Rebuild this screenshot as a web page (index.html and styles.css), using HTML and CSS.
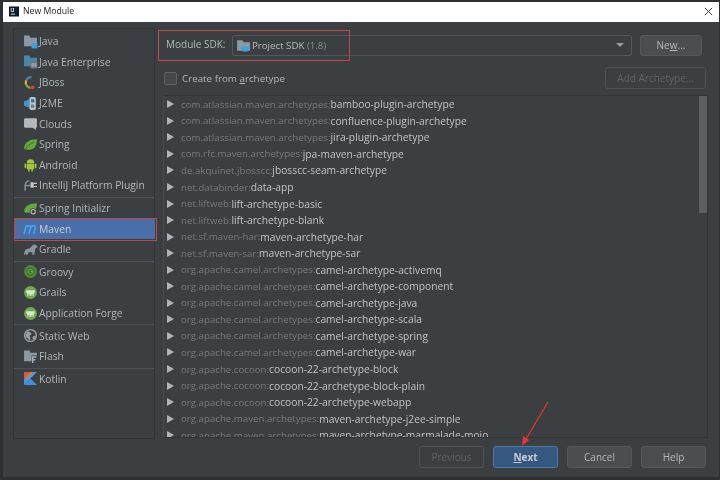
FILE: index.html
```html
<!DOCTYPE html>
<html lang="en">
<head>
<meta charset="utf-8">
<title>New Module</title>
<link rel="stylesheet" href="styles.css">
</head>
<body>
<div class="window">
  <header class="titlebar">
    <svg class="appicon" viewBox="0 0 14 14"><rect width="14" height="14" fill="#111"/><rect x="1" y="1" width="12" height="12" fill="#0b1f33"/><rect x="2.5" y="10" width="6" height="1.2" fill="#fff"/><text x="2.2" y="8" class="appicon-text">IJ</text></svg>
    <span class="title">New Module</span>
    <svg class="close" viewBox="0 0 10 10"><path d="M1 1L9 9M9 1L1 9" stroke="#333" stroke-width="1" fill="none"/></svg>
  </header>
  <div class="body">
    <div class="main">
      <nav class="sidebar">
        <div class="group">
          <div class="item"><svg class="ic" viewBox="0 0 14 14"><path d="M1 1.500h5l1 2h6v8H1z" fill="#8c99a3"/><rect x="8" y="8" width="5.500" height="5.500" fill="#3aa3dc"/></svg>Java</div>
          <div class="item"><svg class="ic" viewBox="0 0 14 14"><path d="M1 1.500h5l1 2h6v8H1z" fill="#4b87a8"/><rect x="7" y="7" width="6.500" height="6.500" fill="#6b7680"/><path d="M8.500 8.500v3.500M10.200 8.500v3.500M11.900 8.500v3.500" stroke="#c8ccd0" stroke-width=".7"/></svg>Java Enterprise</div>
          <div class="item"><svg class="ic" viewBox="0 0 14 14"><path d="M8 2A5 5 0 0 0 3 5" stroke="#3f7fc4" stroke-width="2" fill="none"/><path d="M3 5A5 5 0 0 0 3 9" stroke="#e8b02c" stroke-width="2" fill="none"/><path d="M3 9A5 5 0 0 0 7 12" stroke="#7ea83a" stroke-width="2" fill="none"/><circle cx="9" cy="11.500" r="1.800" fill="#d9412e"/></svg>JBoss</div>
          <div class="item"><svg class="ic" viewBox="0 0 14 14"><path d="M1 5l5-2v8l-5-2z" fill="#3b97d3"/><rect x="6" y="1" width="6" height="12" rx="1.500" fill="#b8c4ce"/><rect x="7.500" y="3" width="3" height="3" fill="#3b6f99"/><rect x="7.500" y="8" width="3" height="3" fill="#6c7a86"/></svg>J2ME</div>
          <div class="item"><svg class="ic" viewBox="0 0 14 14"><path d="M2 2h10a1 1 0 0 1 1 1v7a1 1 0 0 1-1 1v2l-3-2H2a1 1 0 0 1-1-1V3a1 1 0 0 1 1-1z" fill="#b4b9bd"/></svg>Clouds</div>
          <div class="item"><svg class="ic" viewBox="0 0 14 14"><path d="M1 11C1 5 6 2 13 2c0 7-3 10-8 10-2 0-3-.5-4-1z" fill="#62a83c"/><path d="M2 11.500C4 8 7 6 10 5" stroke="#3c3f41" stroke-width=".6" fill="none"/></svg>Spring</div>
          <div class="item"><svg class="ic" viewBox="0 0 14 14"><path d="M3.500 5.500a3.500 3.500 0 0 1 7 0z" fill="#a4c639"/><rect x="3.500" y="6" width="7" height="5.500" rx=".8" fill="#a4c639"/><rect x="1.500" y="6" width="1.500" height="4.500" rx=".7" fill="#a4c639"/><rect x="11" y="6" width="1.500" height="4.500" rx=".7" fill="#a4c639"/><rect x="4.800" y="11" width="1.400" height="2.500" fill="#a4c639"/><rect x="7.800" y="11" width="1.400" height="2.500" fill="#a4c639"/></svg>Android</div>
          <div class="item"><svg class="ic" viewBox="0 0 14 14"><path d="M6 2.500A5 5 0 0 0 2 7v5" stroke="#8f979e" stroke-width="1.300" fill="none"/><path d="M7 4h3v5H7z" fill="#c6cace"/><path d="M10 5h3M10 8h3" stroke="#c6cace" stroke-width="1"/><path d="M2 7h5" stroke="#8f979e" stroke-width="1.200"/></svg>IntelliJ Platform Plugin</div>
        </div>
        <div class="group">
          <div class="item"><svg class="ic" viewBox="0 0 14 14"><path d="M1 10C1 5 6 2 13 2c0 6-3 9-7 9-2 0-4 0-5-1z" fill="#62a83c"/><circle cx="9.500" cy="10" r="3.300" fill="#3c3f41"/><circle cx="9.500" cy="10" r="2" fill="none" stroke="#b9bdc0" stroke-width="1"/></svg>Spring Initializr</div>
          <div class="item selected"><svg class="ic" viewBox="0 0 14 14"><path d="M1 12L3.200 4M2.800 6C4 3.800 7 3.500 7 6L5.500 12M7 6C8.200 3.800 11.500 3.500 11.500 6L10 12" stroke="#3fa6f0" stroke-width="1.600" fill="none"/></svg>Maven</div>
          <div class="item"><svg class="ic" viewBox="0 0 14 14"><path d="M1 12c0-4 2-6 5-6 1 0 2-3 4-3.500 2-.5 3 1 3.500 2.500l-2 1-1 6H9l-.5-2.500H5L4.500 12H3L2.500 10.500 2 12z" fill="#8d979f"/></svg>Gradle</div>
        </div>
        <div class="group">
          <div class="item"><svg class="ic" viewBox="0 0 14 14"><circle cx="7" cy="7" r="6" fill="#4f8a36"/><circle cx="7" cy="7" r="4" fill="#3f752e"/><text x="4.300" y="9.600" class="g-text">G</text></svg>Groovy</div>
          <div class="item"><svg class="ic" viewBox="0 0 14 14"><circle cx="7" cy="7" r="6" fill="#6fa84f"/><path d="M3 5h8v2l-1 .5V10H9V8.500H8V10H6V8.500H5V10H4V7.500L3 7z" fill="#d8e6cc"/></svg>Grails</div>
          <div class="item"><svg class="ic" viewBox="0 0 14 14"><circle cx="7" cy="7" r="6" fill="#6fa84f"/><path d="M3 5h8v2l-1 .5V10H9V8.500H8V10H6V8.500H5V10H4V7.500L3 7z" fill="#d8e6cc"/></svg>Application Forge</div>
        </div>
        <div class="group">
          <div class="item"><svg class="ic" viewBox="0 0 14 14"><circle cx="7" cy="7" r="5.500" fill="#3c3f41" stroke="#9aa2a8" stroke-width="1.300"/><path d="M4 3l3 1 1 2-2 1 1 3-1 2-2-3-2-1zM9 8l3-1-1 3-2 1z" fill="#9aa2a8"/></svg>Static Web</div>
          <div class="item"><svg class="ic" viewBox="0 0 14 14"><path d="M1 1.500h5l1 2h6v8H1z" fill="#8c99a3"/><rect x="8" y="6" width="6" height="8" fill="#3c3f41"/><path d="M9 13V7.500h3.500M9 10h2.500" stroke="#a8b0b6" stroke-width="1.300" fill="none"/></svg>Flash</div>
        </div>
        <div class="group">
          <div class="item"><svg class="ic" viewBox="0 0 14 14"><path d="M1 1h6L1 7.500z" fill="#d95f3a"/><path d="M7 1h6L1 13V7.500z" fill="#3fa0e8"/><path d="M1 13l6-6 6 6z" fill="#3f8fe0"/><path d="M7 1h3L4 7 1 7.500z" fill="#e8703a"/></svg>Kotlin</div>
        </div>
      </nav>
      <section class="content">
        <div class="sdk-row">
          <span class="sdk-label">Module SDK:</span>
          <div class="combo">
            <svg class="ic-sdk" viewBox="0 0 14 14"><path d="M1 2h5l1 2h6v8H1z" fill="#8c99a3"/><path d="M5 8h7v2.500a2 2 0 0 1-2 2H7a2 2 0 0 1-2-2z" fill="#3aa3dc"/></svg>
            <span class="combo-text">Project SDK <span class="dim">(1.8)</span></span>
            <span class="caret"></span>
          </div>
          <button class="btn new">Ne<u>w</u>...</button>
        </div>
        <div class="arch-row">
          <label class="check"><span class="box"></span><span>Create from <u>a</u>rchetype</span></label>
          <button class="btn add">Add Archetype...</button>
        </div>
        <div class="list">
          <div class="rows">
            <div class="row"><i></i><span class="g">com.atlassian.maven.archetypes:</span>bamboo-plugin-archetype</div>
            <div class="row"><i></i><span class="g">com.atlassian.maven.archetypes:</span>confluence-plugin-archetype</div>
            <div class="row"><i></i><span class="g">com.atlassian.maven.archetypes:</span>jira-plugin-archetype</div>
            <div class="row"><i></i><span class="g">com.rfc.maven.archetypes:</span>jpa-maven-archetype</div>
            <div class="row"><i></i><span class="g">de.akquinet.jbosscc:</span>jbosscc-seam-archetype</div>
            <div class="row"><i></i><span class="g">net.databinder:</span>data-app</div>
            <div class="row"><i></i><span class="g">net.liftweb:</span>lift-archetype-basic</div>
            <div class="row"><i></i><span class="g">net.liftweb:</span>lift-archetype-blank</div>
            <div class="row"><i></i><span class="g">net.sf.maven-har:</span>maven-archetype-har</div>
            <div class="row"><i></i><span class="g">net.sf.maven-sar:</span>maven-archetype-sar</div>
            <div class="row"><i></i><span class="g">org.apache.camel.archetypes:</span>camel-archetype-activemq</div>
            <div class="row"><i></i><span class="g">org.apache.camel.archetypes:</span>camel-archetype-component</div>
            <div class="row"><i></i><span class="g">org.apache.camel.archetypes:</span>camel-archetype-java</div>
            <div class="row"><i></i><span class="g">org.apache.camel.archetypes:</span>camel-archetype-scala</div>
            <div class="row"><i></i><span class="g">org.apache.camel.archetypes:</span>camel-archetype-spring</div>
            <div class="row"><i></i><span class="g">org.apache.camel.archetypes:</span>camel-archetype-war</div>
            <div class="row"><i></i><span class="g">org.apache.cocoon:</span>cocoon-22-archetype-block</div>
            <div class="row"><i></i><span class="g">org.apache.cocoon:</span>cocoon-22-archetype-block-plain</div>
            <div class="row"><i></i><span class="g">org.apache.cocoon:</span>cocoon-22-archetype-webapp</div>
            <div class="row"><i></i><span class="g">org.apache.maven.archetypes:</span>maven-archetype-j2ee-simple</div>
            <div class="row"><i></i><span class="g">org.apache.maven.archetypes:</span>maven-archetype-marmalade-mojo</div>
          </div>
          <div class="scrollbar"></div>
        </div>
      </section>
    </div>
    <footer class="footer">
      <button class="btn foot prev">Previous</button>
      <button class="btn foot next"><u>N</u>ext</button>
      <button class="btn foot">Cancel</button>
      <button class="btn foot">Help</button>
    </footer>
  </div>
  <div class="mark mark-sdk"></div>
  <div class="mark mark-maven"></div>
  <svg class="arrow" viewBox="0 0 40 56"><path d="M31 3L9 40" stroke="#e5343a" stroke-width="1.300" fill="none"/><path d="M5 47L6 37 12 41z" fill="#e5343a"/></svg>
</div>
</body>
</html>
```
FILE: styles.css
```css
* { box-sizing: border-box; }
html, body { margin: 0; padding: 0; }
body { width: 720px; height: 480px; overflow: hidden; background: #2b2b2b; font-family: "Open Sans", "Noto Sans", sans-serif; font-size: 10px; color: #b4b8bb; }
.window { position: relative; width: 720px; height: 480px; padding: 2px 1px 3px 3px; background: #2e3032; display: flex; flex-direction: column; filter: blur(0.3px); }
.titlebar { height: 20px; flex: none; background: #fff; display: flex; align-items: center; padding: 0 6px 2px; color: #222; font-size: 8.700px; }
.appicon { width: 10px; height: 11px; margin-right: 4px; }
.appicon-text { font: bold 6.500px "Liberation Sans", sans-serif; fill: #fff; }
.title { flex: 1; }
.close { width: 9px; height: 9px; }
.body { flex: 1; min-height: 0; background: #3c3f41; display: flex; flex-direction: column; padding: 6px 6px 0 10px; }
.main { display: flex; height: 411px; flex: none; gap: 8px; }
.sidebar { width: 142px; flex: none; height: 411px; border: 1px solid #323436; background: #3c3f41; padding-top: 2px; font-size: 10.300px; }
.group { border-bottom: 1px solid #4d5052; padding-bottom: 1px; }
.group:last-child { border-bottom: none; }
.item { height: 20.600px; display: flex; align-items: center; padding-left: 9px; color: #b2b6b9; white-space: nowrap; }
.ic { width: 15px; height: 15px; margin-right: 1px; flex: none; }
.selected { background: #4a6fa8; color: #c8ccd0; margin: 0 -1px 0 0; }
.g-text { font: bold 7.500px "Liberation Sans", sans-serif; fill: #6ea04f; }
.content { flex: 1; min-width: 0; display: flex; flex-direction: column; margin-top: 1px; }
.sdk-row { display: flex; align-items: center; height: 22px; margin-top: 5px; }
.sdk-label { width: 69px; flex: none; padding-left: 3px; position: relative; top: -1px; }
.combo { width: 400px; height: 21px; flex: none; border: 1px solid #55585a; border-radius: 2px; display: flex; align-items: center; padding-left: 3px; background: #3c3f41; }
.ic-sdk { width: 15px; height: 15px; margin-right: 1px; flex: none; }
.combo-text { flex: 1; color: #b8bcbf; font-size: 9.700px; }
.dim { color: #8b8f92; }
.caret { width: 0; height: 0; margin-right: 7px; border-left: 4px solid transparent; border-right: 4px solid transparent; border-top: 4px solid #9a9ea1; }
.btn { font: inherit; color: #b4b8bb; background: #4b4e50; border: 1px solid #55585a; border-radius: 3px; padding: 0; }
.new { width: 62px; height: 21px; margin-left: 8px; }
.arch-row { display: flex; align-items: center; justify-content: space-between; margin-top: 11px; height: 22px; padding-left: 1px; padding-right: 7px; }
.check { display: flex; align-items: center; font-size: 9.800px; }
.box { width: 13px; height: 13px; border: 1px solid #606366; border-radius: 2px; margin-right: 5px; background: #45484a; }
.add { width: 101px; height: 22px; background: #3c3f41; color: #5f6366; border-color: #505355; }
.list { position: relative; margin-top: 6px; height: 343px; width: 545px; border: 1px solid #323436; border-left-color: #4a4d4f; overflow: hidden; display: flex; }
.rows { flex: 1; min-width: 0; }
.row { height: 16.550px; display: flex; align-items: center; padding-left: 3px; white-space: nowrap; color: #bfc3c6; font-size: 10.250px; }
.row i { width: 0; height: 0; margin-right: 7px; flex: none; border-top: 4px solid transparent; border-bottom: 4px solid transparent; border-left: 7px solid #b0b4b7; }
.g { color: #77797b; font-size: 9.700px; }
.scrollbar { width: 8px; flex: none; background: #5c5f61; height: 117px; }
.footer { flex: 1; display: flex; justify-content: flex-end; align-items: center; gap: 9px; padding-right: 7px; padding-bottom: 2px; }
.foot { width: 65px; height: 22px; }
.prev { background: #3c3f41; color: #5f6366; border-color: #505355; }
.next { background: #365880; border-color: #4a7aa8; color: #c8ccd0; font-weight: 700; }
.mark { position: absolute; border: 1px solid #c0474c; }
.mark-sdk { left: 158px; top: 30px; width: 192px; height: 31px; }
.mark-maven { left: 14px; top: 218px; width: 143px; height: 23px; }
.arrow { position: absolute; left: 517px; top: 399px; width: 40px; height: 56px; }
```
